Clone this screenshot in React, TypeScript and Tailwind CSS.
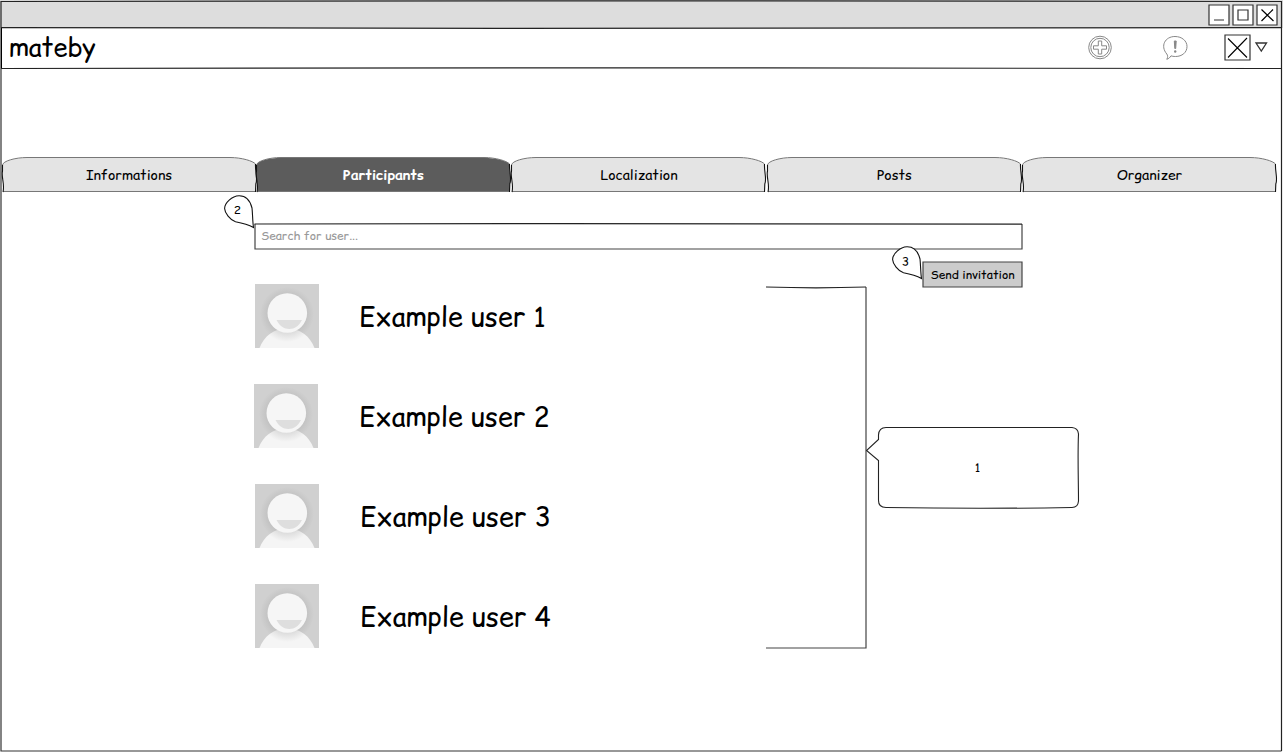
import type { ReactNode } from "react";

const users = [
  { name: "Example user 1", shift: "ml-px", gap: "ml-[40px]" },
  { name: "Example user 2", shift: "", gap: "ml-[41px]" },
  { name: "Example user 3", shift: "ml-px", gap: "ml-[41px]" },
  { name: "Example user 4", shift: "ml-px", gap: "ml-[41px]" },
];

const tabs = [
  { label: "Informations", width: "w-[254px]" },
  { label: "Participants", width: "w-[255px]", active: true },
  { label: "Localization", width: "w-[256px]" },
  { label: "Posts", width: "w-[255px]" },
  { label: "Organizer", width: "w-[255px]" },
];

function Tab({ label, active, width }: { label: string; active?: boolean; width: string }) {
  return (
    <button className={`relative flex h-[36px] items-center justify-center ${width}`}>
      <svg className="absolute inset-0 overflow-visible" width="255" height="36" fill="none">
        <path
          d="M1 35 C3 27 -1 20 .5 14 V8 C1 4 13 1 25 .8 H228 C240 1 251 4 253.5 7 C253 15 256 22 253.8 27 L253.5 35Z"
          fill={active ? "#5c5c5c" : "#e4e4e4"}
        />
        <path d="M.5 8 C1 4 13 .6 25 .5 H228 C240 .6 251 4 253.5 7 M1 34.5 H253.5" stroke="#777" />
        <path d="M1 35 C3 27 -1 20 .5 14 V8 M253.5 7 C253 15 256 22 253.8 27 L253.5 35" stroke="#111" strokeWidth="1.1" />
      </svg>
      <span
        className={
          active
            ? "relative text-[14px] leading-5 font-bold tracking-[0.1px] text-white"
            : "relative text-[14px] leading-5 text-black"
        }
      >
        {label}
      </span>
    </button>
  );
}

function Balloon({ children, className }: { children: ReactNode; className: string }) {
  return (
    <div className={`absolute h-[34px] w-[31px] ${className}`}>
      <svg className="absolute inset-0" width="31" height="34">
        <path
          d="M15 .8 C21.500 .7 26 5 28 13 C28.700 19 28.500 26 29.500 32.5 C25 30 18 28 11.500 26.8 C6 25 .800 18 .6 13.5 C.600 8 8 1 15 .8Z"
          fill="#fff"
          stroke="#111"
          strokeWidth="1.1"
        />
      </svg>
      <span className="relative flex h-[30px] w-[27px] items-center justify-center text-[12px]">
        {children}
      </span>
    </div>
  );
}

function Avatar() {
  return (
    <svg width="64" height="64" viewBox="0 0 64 64" className="shrink-0">
      <defs>
        <radialGradient id="shade" cx="32" cy="30" r="27" gradientUnits="userSpaceOnUse">
          <stop offset="0.7" stopColor="#c2c2c2" />
          <stop offset="1" stopColor="#c2c2c2" stopOpacity="0" />
        </radialGradient>
        <radialGradient id="neck" cx="32" cy="31" r="27" gradientUnits="userSpaceOnUse">
          <stop offset="0.68" stopColor="#dedede" />
          <stop offset="1" stopColor="#f5f5f5" />
        </radialGradient>
      </defs>
      <path d="M0 0H64V64H0Z" fill="#d0d0d0" />
      <circle cx="32" cy="30" r="27" fill="url(#shade)" />
      <path d="M4.500 64 C9 52 19 44.500 32 44.500 S55 52 59.500 64Z" fill="url(#neck)" />
      <circle cx="32.300" cy="29" r="19.800" fill="#f6f6f6" />
      <path d="M21.500 36 H47 C44 42 39.500 45 34.300 45 S24.500 42 21.500 36Z" fill="#dedede" />
    </svg>
  );
}

function WindowButtons() {
  return (
    <svg width="71" height="23" fill="none" stroke="#333" strokeWidth="1.200">
      <g fill="#fff">
        <path d="M1 2H21V22H1Z" />
        <path d="M25 2H45V22H25Z" />
        <path d="M49 2H69V22H49Z" />
      </g>
      <path d="M6 17H16M30 7H40V17H30Z" />
      <path d="M53.500 6.500L65.500 18M65 6.500L53.500 18" stroke="#000" />
    </svg>
  );
}

export default function App() {
  return (
    <div className="relative flex h-[752px] w-[1283px] flex-col overflow-hidden bg-white font-['Comic_Sans_MS','Comic_Relief','Comic_Neue','Lato',sans-serif] text-black">
      <header>
        <div className="flex h-[28px] items-start justify-end bg-[#ddd] pt-[3px] pr-[4px]">
          <WindowButtons />
        </div>
        <div className="flex h-[41px] items-center justify-between">
          <h1 className="ml-[9px] pb-[3px] text-[25.300px] leading-8">mateby</h1>
          <div className="mr-[14px] flex items-center pb-[2px]">
            <svg width="26" height="26" fill="none" stroke="#888">
              <circle cx="13" cy="12.500" r="11.300" />
              <circle cx="13" cy="12.500" r="9.200" />
              <path d="M11.300 6H14.700V10.800H19.500V14.200H14.700V19H11.300V14.200H6.500V10.800H11.300Z" />
            </svg>
            <svg className="ml-[49px]" width="26" height="26" fill="none" stroke="#888">
              <path d="M4.800 24.300 C6 22 5.800 20.500 4.800 19 C-2 11 3 1.500 13 1.500 C20 1.500 25 6 25 11.500 C25 17.500 20 21.500 13.500 21.500 C11.500 21.500 10 21.200 9 20.800 C8 22.600 6.700 23.600 4.800 24.300Z" />
              <path d="M12.300 6H14.200L13.700 13.500H12.800Z" fill="#888" />
              <circle cx="13.200" cy="16.500" r="1.200" fill="#888" stroke="none" />
            </svg>
            <svg className="ml-[35px]" width="46" height="28" fill="none" stroke="#333">
              <path d="M2 1H27V26H2Z" strokeWidth="1.200" />
              <path d="M5 4.500L24 23.500M24 4L5 23.500" stroke="#000" strokeWidth="1.100" />
              <path d="M33 9H43.500L38.300 17Z" strokeWidth="1.300" />
            </svg>
          </div>
        </div>
      </header>

      <nav className="mt-[88px] ml-[2px] flex">
        {tabs.map((tab) => (
          <Tab key={tab.label} {...tab} />
        ))}
      </nav>

      <main className="relative ml-[254px] flex w-[826px] flex-col">
        <label className="relative mt-[30px] block h-[27px] w-[769px]">
          <svg className="absolute inset-0" width="769" height="27" fill="none">
            <path d="M1 1 L1 26 H768 V1" stroke="#444" strokeWidth="1.200" />
            <path d="M.5 1 L300 .6 L768 1.100" stroke="#222" strokeWidth="1.200" />
          </svg>
          <input
            className="relative block h-[26px] w-full bg-transparent pb-[1px] pl-[7px] text-[12px] tracking-[-0.1px] outline-none placeholder:text-[#999]"
            placeholder="Search for user..."
          />
        </label>

        <button className="relative mt-[11px] ml-[668px] flex h-[27px] w-[101px] items-center justify-center text-[12px]">
          <svg className="absolute inset-0" width="101" height="27">
            <path d="M1 1H100V26H1Z" fill="#ccc" stroke="#444" strokeWidth="1.200" />
          </svg>
          <span className="relative">Send invitation</span>
        </button>

        <div className="-mt-[4px] flex">
          <ul className="flex w-[512px] flex-col gap-[36px]">
            {users.map((user) => (
              <li key={user.name} className={`flex h-[64px] items-center ${user.shift}`}>
                <Avatar />
                <span className={`${user.gap} pt-[2px] text-[26.900px] leading-9 whitespace-nowrap`}>{user.name}</span>
              </li>
            ))}
          </ul>
          <svg className="shrink-0" width="102" height="366" fill="none">
            <path d="M100 3V364H0" stroke="#444" strokeWidth="1.200" />
            <path d="M0 3 C30 4 70 4 100 3" stroke="#222" strokeWidth="1.200" />
          </svg>
          <div className="relative mt-[142px] -ml-[2px] flex h-[84px] w-[214px] shrink-0 items-center justify-center">
            <svg className="absolute inset-0" width="214" height="84">
              <path
                d="M20 1.500 C80 2 140 2 206 1.500 Q212 2 212.500 8 C211.500 30 212.500 55 212.500 75 Q212 81.500 206 81.500 C150 82.500 80 82.500 20 81.500 Q12.500 81.500 12.500 74.500 V34.500 L.500 24.500 L12.500 13.500 V9 Q13 1.500 20 1.500Z"
                fill="#fff"
                stroke="#222"
                strokeWidth="1.100"
              />
            </svg>
            <span className="relative ml-[9px] text-[12px]">1</span>
          </div>
        </div>
        <Balloon className="-left-[30px] top-[2px]">2</Balloon>
        <Balloon className="left-[638px] top-[53px]">3</Balloon>
      </main>

      <svg className="pointer-events-none absolute inset-0" width="1283" height="752" fill="none">
        <path d="M1 28V751H1281.500" stroke="#333" strokeWidth="1.200" />
        <path d="M1.500 28V68" stroke="#000" />
        <path d="M1 28V1.500 L640 .800 L1281.500 1.500V751" stroke="#222" strokeWidth="1.200" />
        <path d="M1 27.600 L500 28.300 L1281.500 27.700 M1 68.500 L600 67.800 L1281.500 68.500" stroke="#222" strokeWidth="1.200" />
      </svg>
    </div>
  );
}
